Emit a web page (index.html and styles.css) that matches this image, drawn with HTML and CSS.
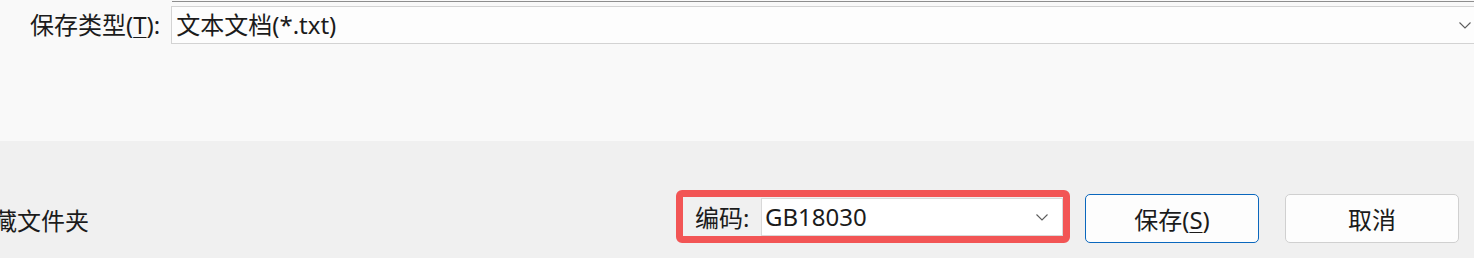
FILE: index.html
```html
<!DOCTYPE html>
<html lang="zh-CN">
<head>
  <meta charset="UTF-8" />
  <title>另存为</title>
  <link rel="stylesheet" href="styles.css">
</head>
<body>

  <div class="dialog">
    <div class="fields">
      <div class="prev-field"></div>
      <div class="field-row">
        <label class="field-label">保存类型(<u>T</u>):</label>
        <div class="select select-wide">
          <span class="select-text">文本文档(*.txt)</span>
          <svg class="chevron" width="12" height="7" viewBox="0 0 12 7"><path d="M0.5 0.5 L6 6 L11.5 0.5" fill="none" stroke="#5c5c5c" stroke-width="1.1"/></svg>
        </div>
      </div>
    </div>

    <div class="footer">
      <span class="hide-folders">藏文件夹</span>
      <div class="actions">
        <div class="encoding">
          <span class="encoding-label">编码:</span>
          <div class="select select-encoding">
            <span class="select-text">GB18030</span>
            <svg class="chevron" width="12" height="7" viewBox="0 0 12 7"><path d="M0.5 0.5 L6 6 L11.5 0.5" fill="none" stroke="#5c5c5c" stroke-width="1.1"/></svg>
          </div>
        </div>
        <button class="btn btn-primary">保存(<u>S</u>)</button>
        <button class="btn">取消</button>
      </div>
    </div>
  </div>

</body>
</html>
```

FILE: styles.css
```css
* {
  box-sizing: border-box;
}
body {
  margin: 0;
  font-family: 'Noto Sans', 'Noto Sans CJK SC', sans-serif;
  font-size: 24px;
  color: #1b1b1b;
  background: #f0f0f0;
  overflow: hidden;
}
.dialog {
  width: 1474px;
  height: 258px;
  display: flex;
  flex-direction: column;
}
.fields {
  height: 141px;
  background: #f9f9f9;
}
.prev-field {
  margin-left: 172px;
  height: 2px;
  border-bottom: 1px solid #8e8e8e;
}
.field-row {
  display: flex;
  align-items: center;
  margin-top: 4px;
}
.field-label {
  width: 172px;
  padding-left: 30px;
  white-space: nowrap;
  line-height: 38px;
}
.field-label u,
.btn u {
  text-decoration-thickness: 1px;
  text-underline-offset: 3px;
}
.select {
  display: flex;
  align-items: center;
  justify-content: space-between;
  background: #fdfdfd;
  border: 1px solid #d3d3d3;
}
.select-wide {
  height: 38px;
  width: 1310px;
  border-right: none;
  padding: 0 3px 0 4px;
}
.select-text {
  line-height: 1;
  white-space: nowrap;
}
.chevron {
  flex: none;
}
.footer {
  flex: 1;
  display: flex;
  justify-content: space-between;
  align-items: flex-end;
  padding: 0 15px 15px 0;
}
.hide-folders {
  margin-left: -7px;
  margin-bottom: 9px;
  line-height: 26px;
}
.actions {
  display: flex;
  align-items: flex-end;
}
.encoding {
  display: flex;
  align-items: center;
  width: 394px;
  height: 53px;
  border: 7px solid #f25555;
  border-radius: 6px;
  background: #f0f0f0;
}
.encoding-label {
  width: 78px;
  padding-left: 12px;
  white-space: nowrap;
}
.select-encoding {
  flex: 1;
  height: 38px;
  margin-top: 1px;
  padding: 0 14px 0 3px;
  border-color: #d9d9d9;
  background: #ffffff;
}
.btn {
  width: 174px;
  height: 49px;
  margin-left: 26px;
  font-family: inherit;
  font-size: 24px;
  color: #1b1b1b;
  background: #fdfdfd;
  border: 1px solid #d0d0d0;
  border-radius: 5px;
  padding: 0;
}
.btn-primary {
  margin-left: 15px;
  border: 1.5px solid #0a67bd;
}
```
